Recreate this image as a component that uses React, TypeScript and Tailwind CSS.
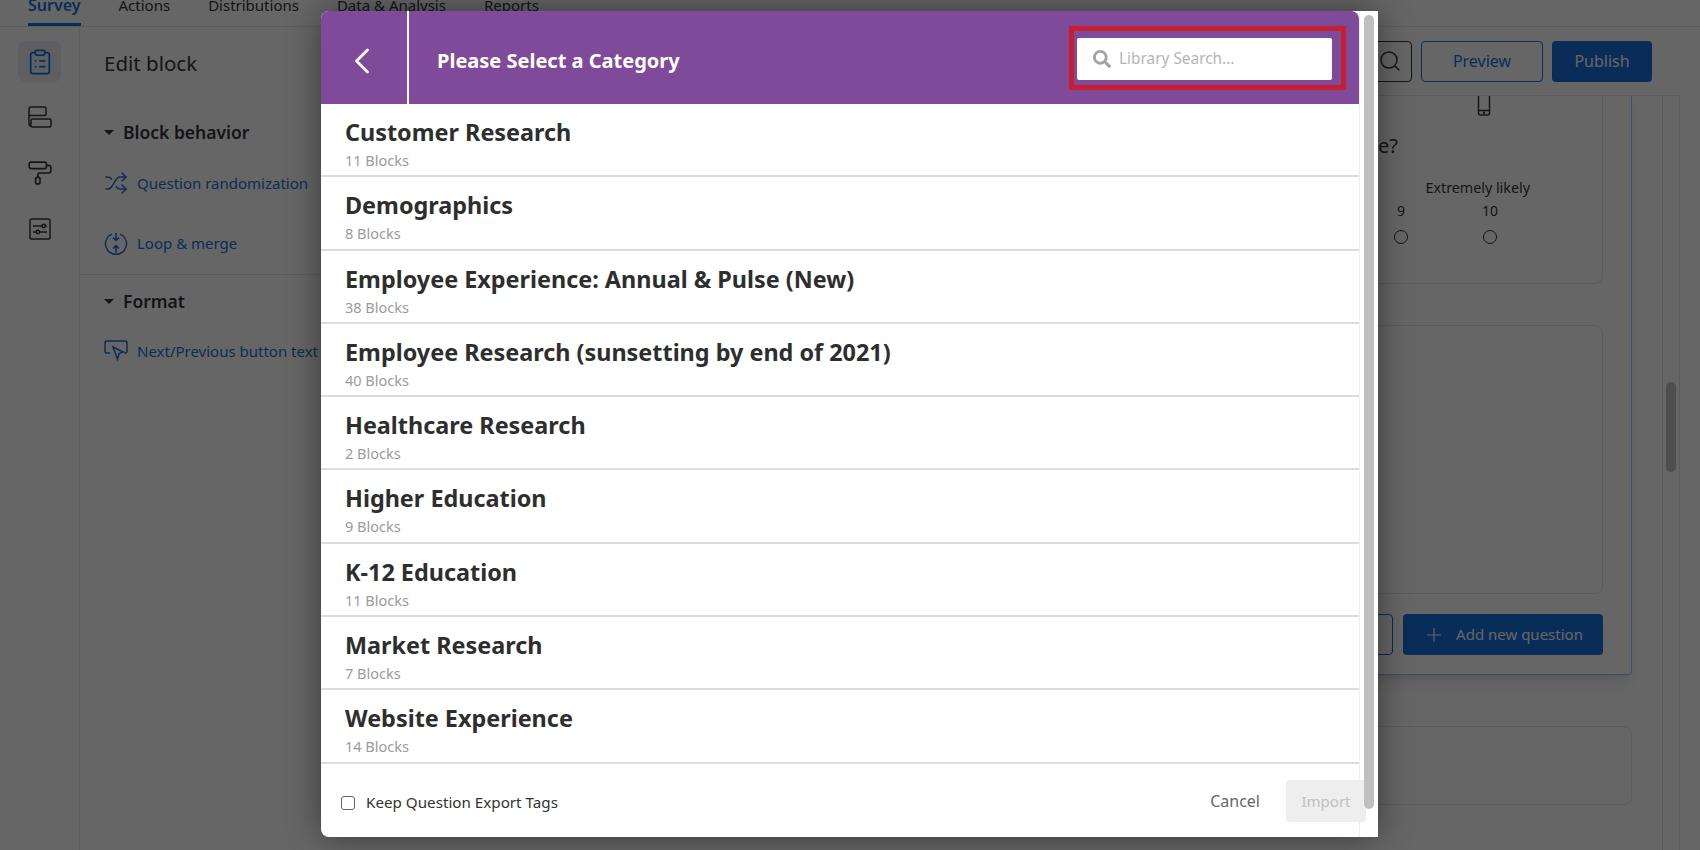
import { ChevronLeft, ClipboardList, PaintRoller, Plus, Search, Shuffle } from "lucide-react";
import { FaSearch } from "react-icons/fa";

const font = "[font-family:'Noto_Sans','Open_Sans',sans-serif]";

const tabs = [
  { label: "Survey", active: true },
  { label: "Actions", active: false },
  { label: "Distributions", active: false },
  { label: "Data & Analysis", active: false },
  { label: "Reports", active: false },
];

const categories = [
  { title: "Customer Research", count: "11 Blocks" },
  { title: "Demographics", count: "8 Blocks" },
  { title: "Employee Experience: Annual & Pulse (New)", count: "38 Blocks" },
  { title: "Employee Research (sunsetting by end of 2021)", count: "40 Blocks" },
  { title: "Healthcare Research", count: "2 Blocks" },
  { title: "Higher Education", count: "9 Blocks" },
  { title: "K-12 Education", count: "11 Blocks" },
  { title: "Market Research", count: "7 Blocks" },
  { title: "Website Experience", count: "14 Blocks" },
];

function BlocksIcon() {
  return (
    <svg width="24" height="24" viewBox="0 0 24 24" fill="none" stroke="currentColor" strokeWidth="1.5">
      <path d="M1 14V3.500A1.500 1.500 0 0 1 2.500 2h14A1.500 1.500 0 0 1 18 3.500V9a1.500 1.500 0 0 1-1.500 1.500H1" />
      <path d="M1 14v5a2 2 0 0 0 2 2" />
      <rect x="3" y="14" width="20" height="8" rx="1.500" />
    </svg>
  );
}

function OptionsIcon() {
  return (
    <svg width="22" height="22" viewBox="0 0 22 22" fill="none" stroke="currentColor" strokeWidth="1.500">
      <rect x="1" y="1" width="20" height="20" rx="1.500" />
      <path d="M4 8h9M16.500 8H18M4 14h3M10.500 14H18" />
      <circle cx="14.700" cy="8" r="1.700" />
      <circle cx="8.800" cy="14" r="1.700" />
    </svg>
  );
}

function LoopIcon() {
  return (
    <svg width="24" height="24" viewBox="0 0 24 24" fill="none" stroke="currentColor" strokeWidth="1.500" className="shrink-0">
      <path d="M8 3.100A10.500 10.500 0 1 0 16 3.100" />
      <path d="M12 2v7M9 6.500 12 9.500l3-3" />
      <path d="M12 22v-7M9 17.500l3-3 3 3" />
    </svg>
  );
}

function PointerIcon() {
  return (
    <svg width="24" height="22" viewBox="0 0 24 22" fill="none" stroke="currentColor" strokeWidth="1.500" className="shrink-0">
      <path d="M6 13H3a2 2 0 0 1-2-2V3a2 2 0 0 1 2-2h18a2 2 0 0 1 2 2v8a2 2 0 0 1-2 2h-1" />
      <path d="M9 7l10 5-4 1.500-1.500 5.500z" />
    </svg>
  );
}

function PhoneStub() {
  return (
    <svg width="14" height="20" viewBox="0 0 14 20" fill="none" stroke="currentColor" strokeWidth="1.500" className="mr-[111px]">
      <path d="M1.500 0v17a2 2 0 0 0 2 2h7a2 2 0 0 0 2-2V0" />
      <path d="M1.500 14.500h11" />
      <circle cx="7" cy="16.700" r="0.500" />
    </svg>
  );
}

function CaretHeading({ label }: { label: string }) {
  return (
    <div className="flex items-center gap-[9px] pl-[24px]">
      <span className="h-0 w-0 border-x-[5px] border-t-[5px] border-x-transparent border-t-[#32363a]" />
      <span className="text-[17.500px] font-semibold leading-6 text-[#32363a]">{label}</span>
    </div>
  );
}

export default function App() {
  return (
    <div className={`relative flex h-screen w-full flex-col overflow-hidden bg-white ${font}`}>
      {/* top tabs, cut off by the top of the window */}
      <div className="flex h-[27px] shrink-0 items-end gap-[38px] overflow-hidden border-b border-[#e4e6e8] pl-[28px]">
        {tabs.map((tab) => (
          <div
            key={tab.label}
            className={`h-[26px] border-b-[3px] leading-[10px] ${
              tab.active ? "border-[#1a6fdc] text-[16px] font-semibold text-[#1a6fdc]" : "border-transparent text-[15px] text-[#32363a]"
            }`}
          >
            {tab.label}
          </div>
        ))}
      </div>

      <div className="flex min-h-0 flex-1">
        {/* icon rail */}
        <div className="flex w-[80px] shrink-0 flex-col items-center gap-[10px] border-r border-[#e4e6e8] pt-[14px] text-[#32363a]">
          <div className="flex h-[41px] w-[43px] items-center justify-center rounded-lg bg-[#e8edf5] text-[#1a6fdc]">
            <ClipboardList size={28} strokeWidth={1.500} />
          </div>
          <div className="mt-[2px] flex h-[46px] items-center"><BlocksIcon /></div>
          <div className="flex h-[46px] items-center"><PaintRoller size={26} strokeWidth={1.500} /></div>
          <div className="flex h-[46px] items-center"><OptionsIcon /></div>
        </div>

        {/* edit block panel */}
        <div className="w-[250px] shrink-0">
          <div className="pl-[24px] pt-[21px] text-[20.500px] leading-[30px] text-[#32363a]">Edit block</div>
          <div className="pt-[42px]"><CaretHeading label="Block behavior" /></div>
          <div className="flex items-center gap-[9px] whitespace-nowrap pl-[24px] pt-[27px] text-[15px] text-[#1a6fdc]">
            <Shuffle size={24} strokeWidth={1.500} className="shrink-0" />
            Question randomization
          </div>
          <div className="flex items-center gap-[9px] whitespace-nowrap pl-[24px] pt-[36px] text-[15px] text-[#1a6fdc]">
            <LoopIcon />
            Loop &amp; merge
          </div>
          <div className="mt-[19px] border-t border-[#e4e6e8] pt-[14px]"><CaretHeading label="Format" /></div>
          <div className="flex items-center gap-[9px] whitespace-nowrap pl-[24px] pt-[27px] text-[15px] text-[#1a6fdc]">
            <PointerIcon />
            Next/Previous button text
          </div>
        </div>

        {/* survey builder */}
        <div className="mr-[20px] flex min-w-0 flex-1 flex-col">
          <div className="flex h-[69px] shrink-0 items-center justify-end gap-[9px] border-b border-[#e4e6e8] pb-[14px] pr-[28px] pt-[14px]">
            <div className="flex h-[41px] w-[44px] items-center justify-center rounded border border-[#32363a] text-[#32363a]">
              <Search size={24} strokeWidth={1.500} />
            </div>
            <div className="flex h-[41px] w-[122px] items-center justify-center rounded border border-[#1a6fdc] text-[16px] text-[#1a6fdc]">Preview</div>
            <div className="flex h-[41px] w-[100px] items-center justify-center rounded bg-[#1a6fdc] text-[16px] text-white">Publish</div>
          </div>

          <div className="flex min-h-0 flex-1">
            <div className="flex min-w-0 flex-1 flex-col pr-[30px]">
              <div className="flex h-[579px] shrink-0 flex-col rounded-b border-x border-b border-[#9cc2f0] pr-[28px] shadow-lg">
                <div className="flex h-[188px] shrink-0 flex-col items-end rounded-b-lg border-b border-r border-[#e4e6e8] text-[#32363a]">
                  <PhoneStub />
                  <div className="mr-[204px] mt-[18px] whitespace-nowrap text-[20px] leading-6">How likely is it that you would recommend us to a friend or colleague?</div>
                  <div className="mr-[72px] mt-[20px] text-[14.300px] leading-5">Extremely likely</div>
                  <div className="mr-[104px] mt-[3px] flex gap-[77px] text-[14px] leading-5">
                    <span>9</span>
                    <span>10</span>
                  </div>
                  <div className="mr-[105px] mt-[9px] flex gap-[75px]">
                    <span className="h-[14px] w-[14px] rounded-full border border-[#32363a]" />
                    <span className="h-[14px] w-[14px] rounded-full border border-[#32363a]" />
                  </div>
                </div>
                <div className="mt-[41px] h-[269px] shrink-0 rounded-lg border border-[#e4e6e8]" />
                <div className="mt-[20px] flex justify-end gap-[10px]">
                  <div className="flex h-[41px] w-[200px] items-center justify-center rounded border border-[#1a6fdc] text-[15px] text-[#1a6fdc]">Import from library</div>
                  <div className="flex h-[41px] w-[200px] items-center justify-center gap-[11px] rounded bg-[#1a6fdc] text-[15px] text-white">
                    <Plus size={22} strokeWidth={1.250} />
                    Add new question
                  </div>
                </div>
              </div>
              <div className="mt-[51px] h-[79px] shrink-0 rounded-lg border border-[#e4e6e8]" />
            </div>
            <div className="w-[18px] shrink-0 border-x border-[#e4e6e8] px-[3px] pt-[286px]">
              <div className="h-[90px] rounded-full bg-[#c4c4c4]" />
            </div>
          </div>
        </div>
      </div>

      {/* dim layer */}
      <div className="absolute inset-0 bg-black/60" />

      {/* library dialog */}
      <div className="absolute left-[321px] top-[11px] flex h-[826px] w-[1057px] rounded-lg rounded-br-none rounded-tr-none bg-white shadow-[0_0_34px_rgba(0,0,0,0.45)]">
        <div className="flex w-[1038px] shrink-0 flex-col">
          <div className="flex h-[93px] shrink-0 items-center rounded-t-lg bg-[#804a9a] text-white">
            <div className="flex h-full w-[88px] shrink-0 items-center justify-center border-r-2 border-white pr-[4px] pt-[7px]">
              <ChevronLeft size={44} strokeWidth={1.500} />
            </div>
            <div className="flex-1 pl-[28px] pt-[7px] text-[20px] font-bold">Please Select a Category</div>
            <div className="mr-[13px] border-[5px] border-[#c4202f] pb-[5px] pl-[3px] pr-[9px] pt-[7px]">
              <div className="flex h-[42px] w-[255px] items-center gap-[8px] rounded-[2px] bg-white pl-[16px] text-[15.400px] text-[#b5b5b5]">
                <FaSearch size={18} className="text-[#a3a3a3]" />
                Library Search...
              </div>
            </div>
          </div>

          <div className="shrink-0">
            {categories.map((category) => (
              <div key={category.title} className="h-[73.300px] border-b-2 border-[#dcdcdc] pl-[24px] pt-[10px]">
                <div className="text-[23.400px] font-bold leading-[36px] text-[#2e2e2e]">{category.title}</div>
                <div className="text-[14.500px] leading-[20px] text-[#9b9b9b]">{category.count}</div>
              </div>
            ))}
          </div>

          <div className="flex flex-1 items-center justify-between pl-[20px] pt-[2px]">
            <div className="mt-[3px] flex items-center gap-[11px] text-[15.200px] text-[#333]">
              <span className="h-[14px] w-[14px] rounded-[3px] border border-[#666]" />
              Keep Question Export Tags
            </div>
            <div className="mr-[-7px] flex items-center gap-[26px]">
              <span className="text-[16px] text-[#666]">Cancel</span>
              <span className="flex h-[42px] w-[80px] items-center justify-center rounded bg-[#eeeeee] text-[15px] text-[#c0c0c0]">Import</span>
            </div>
          </div>
        </div>

        {/* dialog scrollbar */}
        <div className="relative z-10 w-[19px] shrink-0 border-l border-[#eeeeee] pl-[4px] pt-[4px]">
          <div className="h-[794px] w-[10px] rounded-full bg-[#bfbfbf]" />
        </div>
      </div>
    </div>
  );
}
